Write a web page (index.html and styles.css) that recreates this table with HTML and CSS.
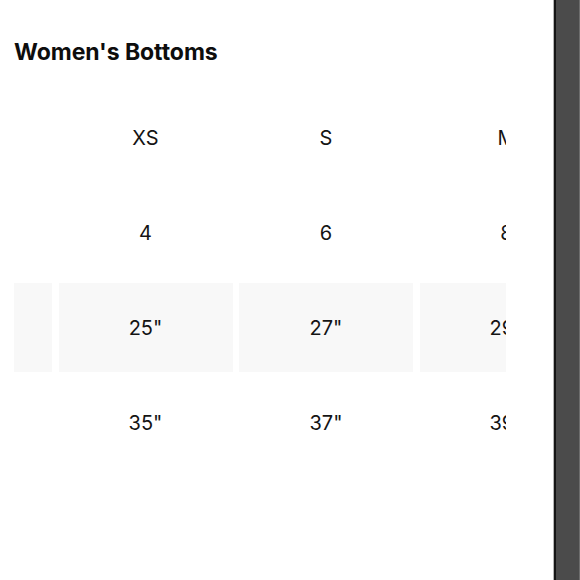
FILE: index.html
```html
<!DOCTYPE html>
<html lang="en">
<head>
<meta charset="utf-8">
<title>Women's Bottoms</title>
<link rel="stylesheet" href="styles.css">
</head>
<body>
<div class="page">
  <main class="content">
    <h1 class="title">Women's Bottoms</h1>
    <div class="scroller">
      <div class="chart">
        <div class="cell label"></div>
        <div class="cell">XS</div>
        <div class="cell">S</div>
        <div class="cell">M</div>

        <div class="cell label"></div>
        <div class="cell">4</div>
        <div class="cell">6</div>
        <div class="cell">8</div>

        <div class="cell label shade"></div>
        <div class="cell shade">25"</div>
        <div class="cell shade">27"</div>
        <div class="cell shade">29"</div>

        <div class="cell label"></div>
        <div class="cell">35"</div>
        <div class="cell">37"</div>
        <div class="cell">39"</div>
      </div>
    </div>
  </main>
  <aside class="sidebar"></aside>
</div>
</body>
</html>
```

FILE: styles.css
```css
html, body {
  margin: 0;
  padding: 0;
  background: #ffffff;
}

.page {
  display: flex;
  width: 580px;
  height: 580px;
  overflow: hidden;
}

.content {
  width: 553px;
  flex: none;
  padding: 38px 0 0 14px;
  box-sizing: border-box;
  background: #ffffff;
}

.title {
  margin: 0;
  font-family: Inter, "Liberation Sans", sans-serif;
  font-weight: 700;
  font-size: 23px;
  line-height: 28px;
  color: #0d0d0d;
  letter-spacing: -0.05px;
}

.scroller {
  width: 492px;
  margin-top: 27px;
  overflow: hidden;
}

.chart {
  display: grid;
  grid-template-columns: 38px repeat(3, 174px);
  grid-auto-rows: 89px;
  column-gap: 6.5px;
  row-gap: 6px;
  width: max-content;
}

.cell {
  display: flex;
  align-items: center;
  justify-content: center;
  font-family: Inter, "Liberation Sans", sans-serif;
  font-size: 20px;
  font-weight: 400;
  color: #141414;
}

.shade {
  background: #f8f8f8;
}

.sidebar {
  flex: none;
  width: 27px;
  height: 580px;
  box-sizing: border-box;
  background: #4b4b4b;
  border-left: 1px solid #b5b5b5;
  box-shadow: inset 2px 0 0 #151515;
  border-right: 1px solid #6d6d6d;
}
```
